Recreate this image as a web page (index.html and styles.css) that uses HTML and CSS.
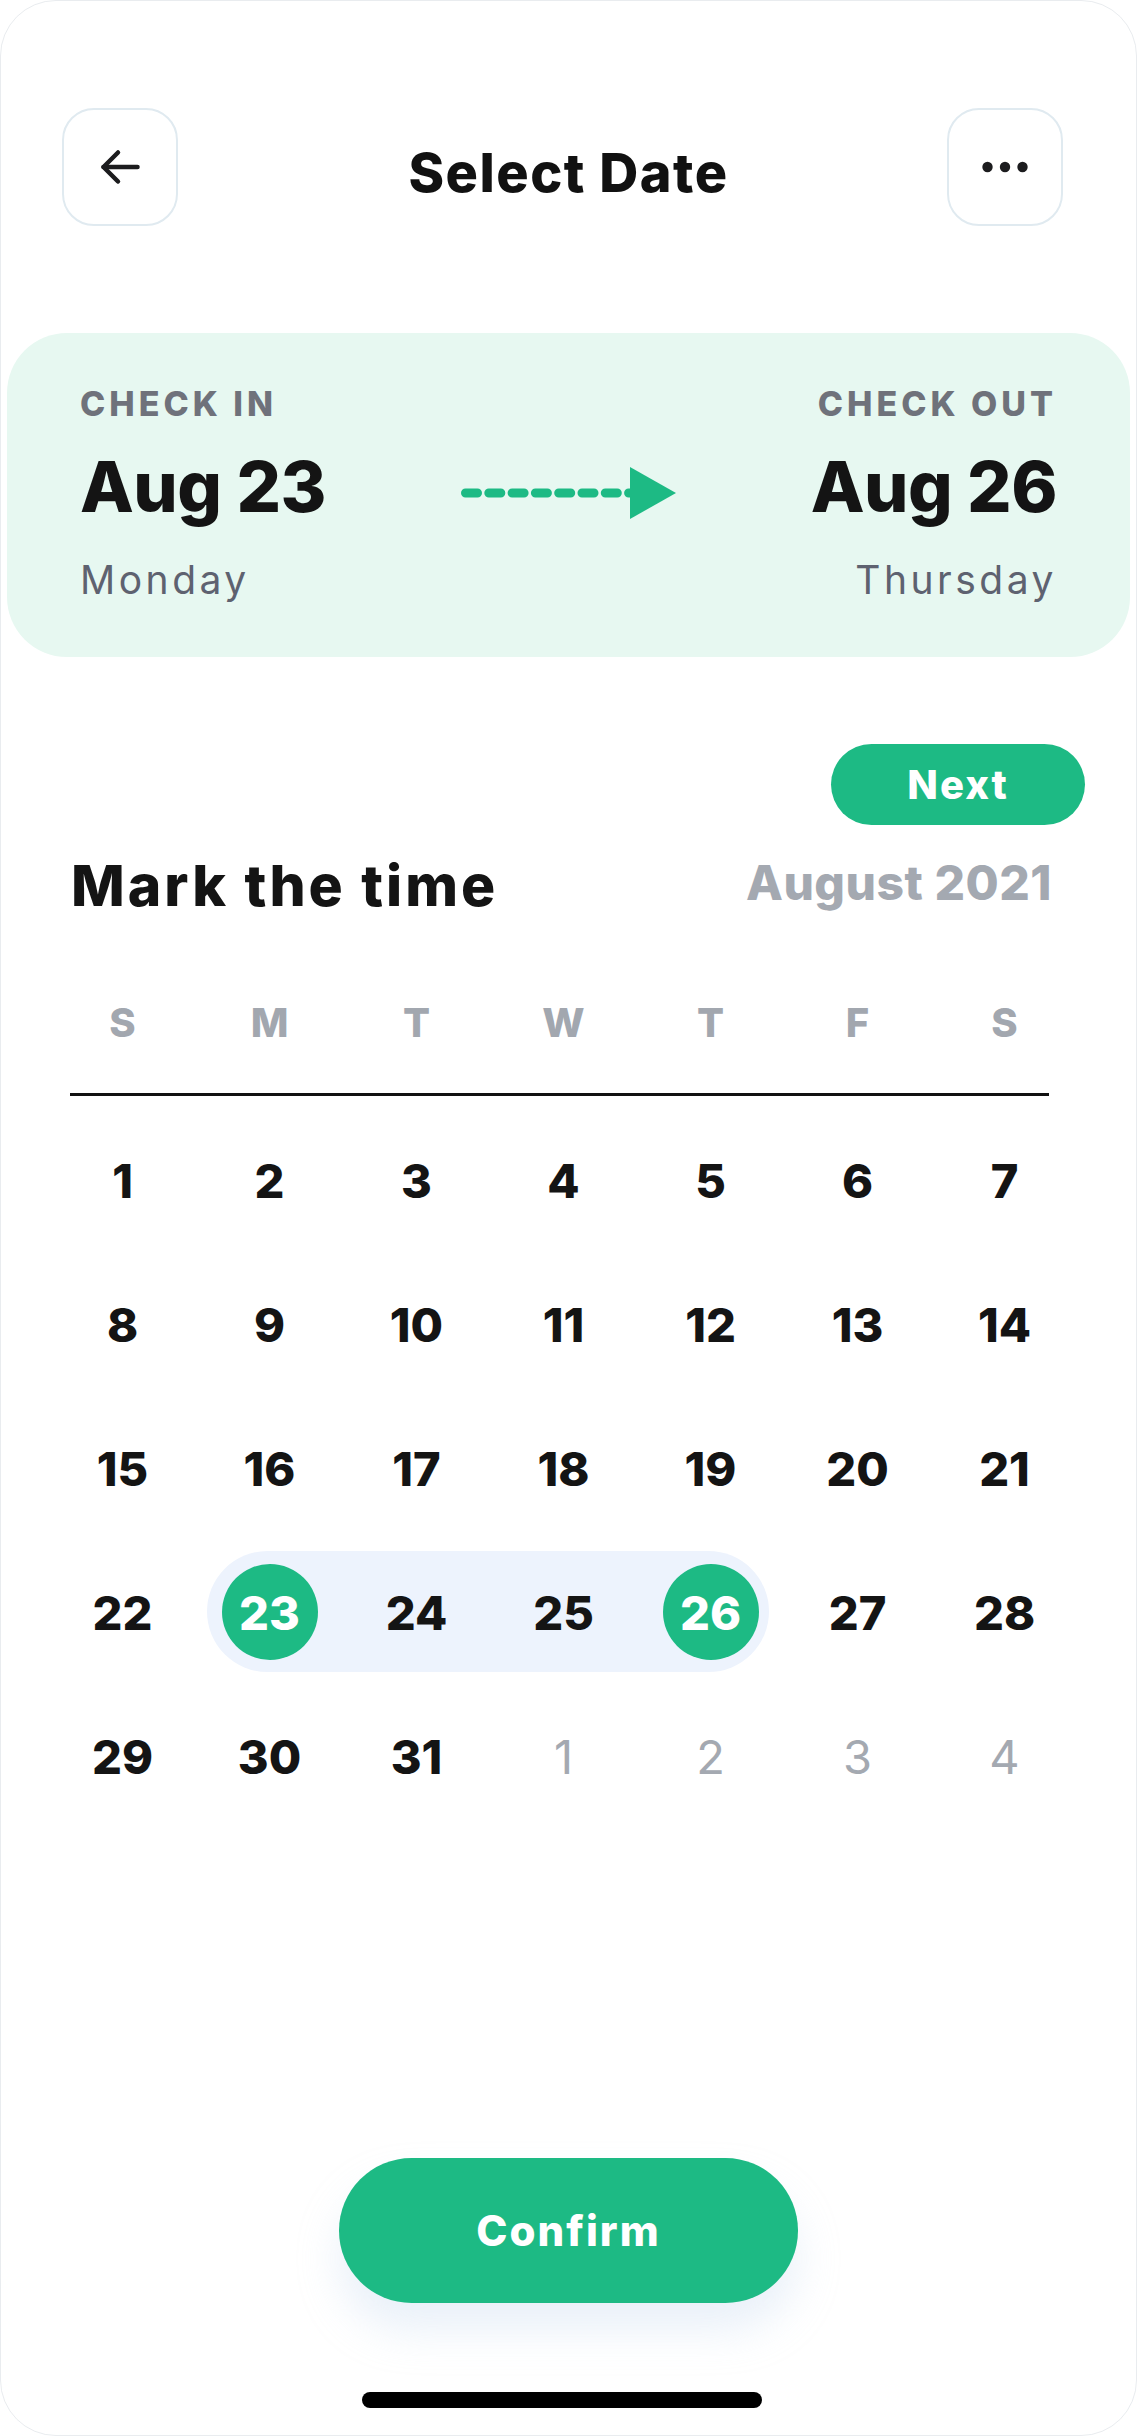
FILE: index.html
```html
<!DOCTYPE html>
<html lang="en">
<head>
  <meta charset="UTF-8" />
  <meta name="viewport" content="width=device-width, initial-scale=1.0"/>
  <title>Select Date</title>
  <link rel="stylesheet" href="styles.css">
</head>
<body>

<div class="phone">

  <header class="top-bar">
    <button class="icon-btn" aria-label="Back">
      <svg width="40" height="36" viewBox="0 0 40 36" fill="none" stroke="#1c1c1e" stroke-width="4.5" stroke-linecap="round" stroke-linejoin="round">
        <path d="M37.5 18H3.5"/>
        <path d="M18 3.5L3.5 18L18 32.5"/>
      </svg>
    </button>
    <h1 class="title">Select Date</h1>
    <button class="icon-btn" aria-label="More">
      <svg width="46" height="12" viewBox="0 0 46 12" fill="#1c1c1e">
        <circle cx="5.5" cy="6" r="5.2"/>
        <circle cx="23" cy="6" r="5.2"/>
        <circle cx="40.5" cy="6" r="5.2"/>
      </svg>
    </button>
  </header>

  <!-- stay summary -->
  <div class="stay-card">
    <div class="stay">
      <div class="stay-label">CHECK IN</div>
      <div class="stay-date">Aug 23</div>
      <div class="stay-day">Monday</div>
    </div>
    <svg class="stay-arrow" width="215" height="52" viewBox="0 0 215 52">
      <line x1="4.5" y1="26" x2="172" y2="26" stroke="#1dba84" stroke-width="9" stroke-linecap="round" stroke-dasharray="12 11.3"/>
      <polygon points="169,0 215,26 169,52" fill="#1dba84"/>
    </svg>
    <div class="stay stay-out">
      <div class="stay-label">CHECK OUT</div>
      <div class="stay-date">Aug 26</div>
      <div class="stay-day">Thursday</div>
    </div>
  </div>

  <button class="next-btn">Next</button>

  <div class="cal-head">
    <h2 class="cal-title">Mark the time</h2>
    <span class="cal-month">August 2021</span>
  </div>

  <div class="weekdays">
    <span>S</span><span>M</span><span>T</span><span>W</span><span>T</span><span>F</span><span>S</span>
  </div>
  <div class="divider"></div>

  <div class="month">
    <div class="week">
      <span class="day">1</span><span class="day">2</span><span class="day">3</span><span class="day">4</span><span class="day">5</span><span class="day">6</span><span class="day">7</span>
    </div>
    <div class="week">
      <span class="day">8</span><span class="day">9</span><span class="day">10</span><span class="day">11</span><span class="day">12</span><span class="day">13</span><span class="day">14</span>
    </div>
    <div class="week">
      <span class="day">15</span><span class="day">16</span><span class="day">17</span><span class="day">18</span><span class="day">19</span><span class="day">20</span><span class="day">21</span>
    </div>
    <div class="week">
      <span class="day">22</span>
      <div class="range">
        <span class="day"><span class="pick">23</span></span>
        <span class="day">24</span>
        <span class="day">25</span>
        <span class="day"><span class="pick">26</span></span>
      </div>
      <span class="day">27</span><span class="day">28</span>
    </div>
    <div class="week">
      <span class="day">29</span><span class="day">30</span><span class="day">31</span>
      <span class="day muted">1</span><span class="day muted">2</span><span class="day muted">3</span><span class="day muted">4</span>
    </div>
  </div>

  <button class="confirm-btn">Confirm</button>
  <div class="home-bar"></div>
</div>

</body>
</html>
```

FILE: styles.css
```css
* { box-sizing: border-box; }
body { margin: 0; background: #fff; font-family: Inter, "Noto Sans", sans-serif; color: #141414; }
button { font-family: inherit; border: none; cursor: pointer; }

.phone { width: 1137px; height: 2436px; border: 1px solid #e9ecef; border-radius: 56px; display: flex; flex-direction: column; overflow: hidden; }

/* header */
.top-bar { margin-top: 107px; padding: 0 73px 0 61px; display: grid; grid-template-columns: 116px 1fr 116px; align-items: center; }
.icon-btn { width: 116px; height: 118px; background: #fff; border: 2px solid #e0eaf0; border-radius: 32px; display: flex; align-items: center; justify-content: center; padding: 0; }
.title { margin: 12px 0 0 12px; text-align: center; font-size: 54px; line-height: 54px; font-weight: 800; letter-spacing: 1.5px; color: #111; }

/* check in / check out */
.stay-card { margin: 107px 6px 0; padding: 54px 73px 58px; background: #e7f8f1; border-radius: 60px; display: grid; grid-template-columns: 1fr auto 1fr; align-items: center; }
.stay-out { text-align: right; }
.stay-label { font-size: 34px; line-height: 34px; font-weight: 800; letter-spacing: 4px; color: #6f727b; }
.stay-date { margin-top: 31px; font-size: 70px; line-height: 70px; font-weight: 800; letter-spacing: -0.5px; color: #141414; }
.stay-day { margin-top: 38px; font-size: 39px; line-height: 39px; font-weight: 400; letter-spacing: 3.5px; color: #5e6270; }
.stay-arrow { display: block; }

/* calendar */
.next-btn { align-self: flex-end; margin: 87px 51px 0 0; width: 254px; height: 81px; border-radius: 41px; background: #1dba84; color: #fff; font-size: 40px; font-weight: 800; letter-spacing: 2px; }

.cal-head { margin-top: 32px; padding: 0 84px 0 70px; display: flex; justify-content: space-between; align-items: flex-end; }
.cal-title { margin: 0; font-size: 57px; line-height: 57px; font-weight: 800; letter-spacing: 3px; color: #141414; }
.cal-month { margin-bottom: 7px; font-size: 48px; line-height: 48px; font-weight: 800; letter-spacing: 0.5px; color: #a4a9b1; }

.weekdays, .week { margin: 0 60px 0 48px; display: grid; grid-template-columns: repeat(7, 147px); }
.weekdays { margin-top: 89px; font-size: 40px; line-height: 40px; font-weight: 800; color: #a2a7af; text-align: center; }
.divider { margin: 50px 87px 0 69px; height: 3px; background: #111; }

.month { margin-top: 12px; }
.week { height: 144px; }
.day { height: 144px; display: flex; align-items: center; justify-content: center; font-size: 47px; font-weight: 800; color: #141414; }
.day.muted { font-weight: 400; color: #a4a9b1; }

.range { grid-column: span 4; display: grid; grid-template-columns: repeat(4, 147px); position: relative; z-index: 0; }
.range::before { content: ""; position: absolute; inset: 11px 15px 12px 11px; background: #edf3fd; border-radius: 61px; z-index: -1; }
.pick { width: 96px; height: 96px; border-radius: 50%; background: #1dba84; color: #fff; display: flex; align-items: center; justify-content: center; }

.confirm-btn { align-self: center; margin-top: auto; width: 459px; height: 145px; border-radius: 73px; background: #1dba84; color: #fff; font-size: 42px; font-weight: 800; letter-spacing: 2px; box-shadow: 0 28px 40px rgba(196, 214, 238, 0.35); }
.home-bar { margin: 89px 0 27px 361px; width: 400px; height: 16px; border-radius: 8px; background: #000; }
```
